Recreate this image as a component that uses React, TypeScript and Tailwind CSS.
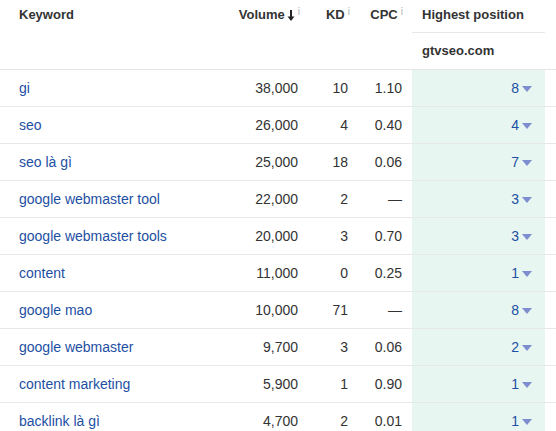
import React from "react";

type Row = {
  keyword: string;
  volume: string;
  kd: string;
  cpc: string;
  pos: string;
};

const rows: Row[] = [
  { keyword: "gi", volume: "38,000", kd: "10", cpc: "1.10", pos: "8" },
  { keyword: "seo", volume: "26,000", kd: "4", cpc: "0.40", pos: "4" },
  { keyword: "seo là gì", volume: "25,000", kd: "18", cpc: "0.06", pos: "7" },
  { keyword: "google webmaster tool", volume: "22,000", kd: "2", cpc: "—", pos: "3" },
  { keyword: "google webmaster tools", volume: "20,000", kd: "3", cpc: "0.70", pos: "3" },
  { keyword: "content", volume: "11,000", kd: "0", cpc: "0.25", pos: "1" },
  { keyword: "google mao", volume: "10,000", kd: "71", cpc: "—", pos: "8" },
  { keyword: "google webmaster", volume: "9,700", kd: "3", cpc: "0.06", pos: "2" },
  { keyword: "content marketing", volume: "5,900", kd: "1", cpc: "0.90", pos: "1" },
  { keyword: "backlink là gì", volume: "4,700", kd: "2", cpc: "0.01", pos: "1" },
];

const Info = () => (
  <span className="ml-[3px] inline-block align-top text-[10px] leading-[10px] font-normal text-[#b0b0b0] mt-[2px]">i</span>
);

const Caret = () => (
  <svg width="10" height="6" viewBox="0 0 10 6" className="ml-[3px] inline-block">
    <path d="M0 0H10L5 6Z" fill="#7d8dcf" />
  </svg>
);

export default function App() {
  return (
    <div className="w-[556px] h-[431px] overflow-hidden bg-white font-['Liberation_Sans',Arial,sans-serif] text-[14px] text-[#333]">
      <table className="table-fixed border-collapse w-[556px]">
        <colgroup>
          <col className="w-[230px]" />
          <col className="w-[78px]" />
          <col className="w-[50px]" />
          <col className="w-[54px]" />
          <col className="w-[133px]" />
          <col className="w-[11px]" />
        </colgroup>
        <thead className="text-[13px]">
          <tr className="h-[32px]">
            <th className="pl-[19px] pb-[3px] text-left font-bold align-middle">Keyword</th>
            <th className="pr-[8px] pb-[3px] text-right font-bold whitespace-nowrap">
              Volume
              <svg width="8" height="11" viewBox="0 0 8 11" className="inline-block ml-[2px] -mb-[1px]">
                <path d="M4 0V9" stroke="#222" strokeWidth="2" />
                <path d="M0.5 6.5L4 11L7.5 6.5Z" fill="#222" />
              </svg>
              <Info />
            </th>
            <th className="pr-[8px] pb-[3px] text-right font-bold">
              KD
              <Info />
            </th>
            <th className="pr-[9px] pb-[3px] text-right font-bold">
              CPC
              <Info />
            </th>
            <th className="pl-[10px] pb-[3px] text-left font-bold border-b border-[#e8e8e8] whitespace-nowrap">
              Highest position
            </th>
            <th />
          </tr>
          <tr className="h-[37px] border-b border-[#e5e5e5]">
            <th />
            <th />
            <th />
            <th />
            <th className="pl-[10px] text-left font-bold">gtvseo.com</th>
            <th />
          </tr>
        </thead>
        <tbody>
          {rows.map((r) => (
            <tr key={r.keyword} className="h-[37px] border-b border-[#e8e8e8]">
              <td className="pl-[19px] pt-[1px] text-[#1d4fa3] whitespace-nowrap">{r.keyword}</td>
              <td className="pr-[10px] pt-[1px] text-right">{r.volume}</td>
              <td className="pr-[10px] pt-[1px] text-right">{r.kd}</td>
              <td className="pr-[10px] pt-[1px] text-right">{r.cpc}</td>
              <td className="bg-[#e7f6f0] pr-[13px] pt-[1px] text-right text-[#1d4fa3]">
                {r.pos}
                <Caret />
              </td>
              <td />
            </tr>
          ))}
        </tbody>
      </table>
    </div>
  );
}
